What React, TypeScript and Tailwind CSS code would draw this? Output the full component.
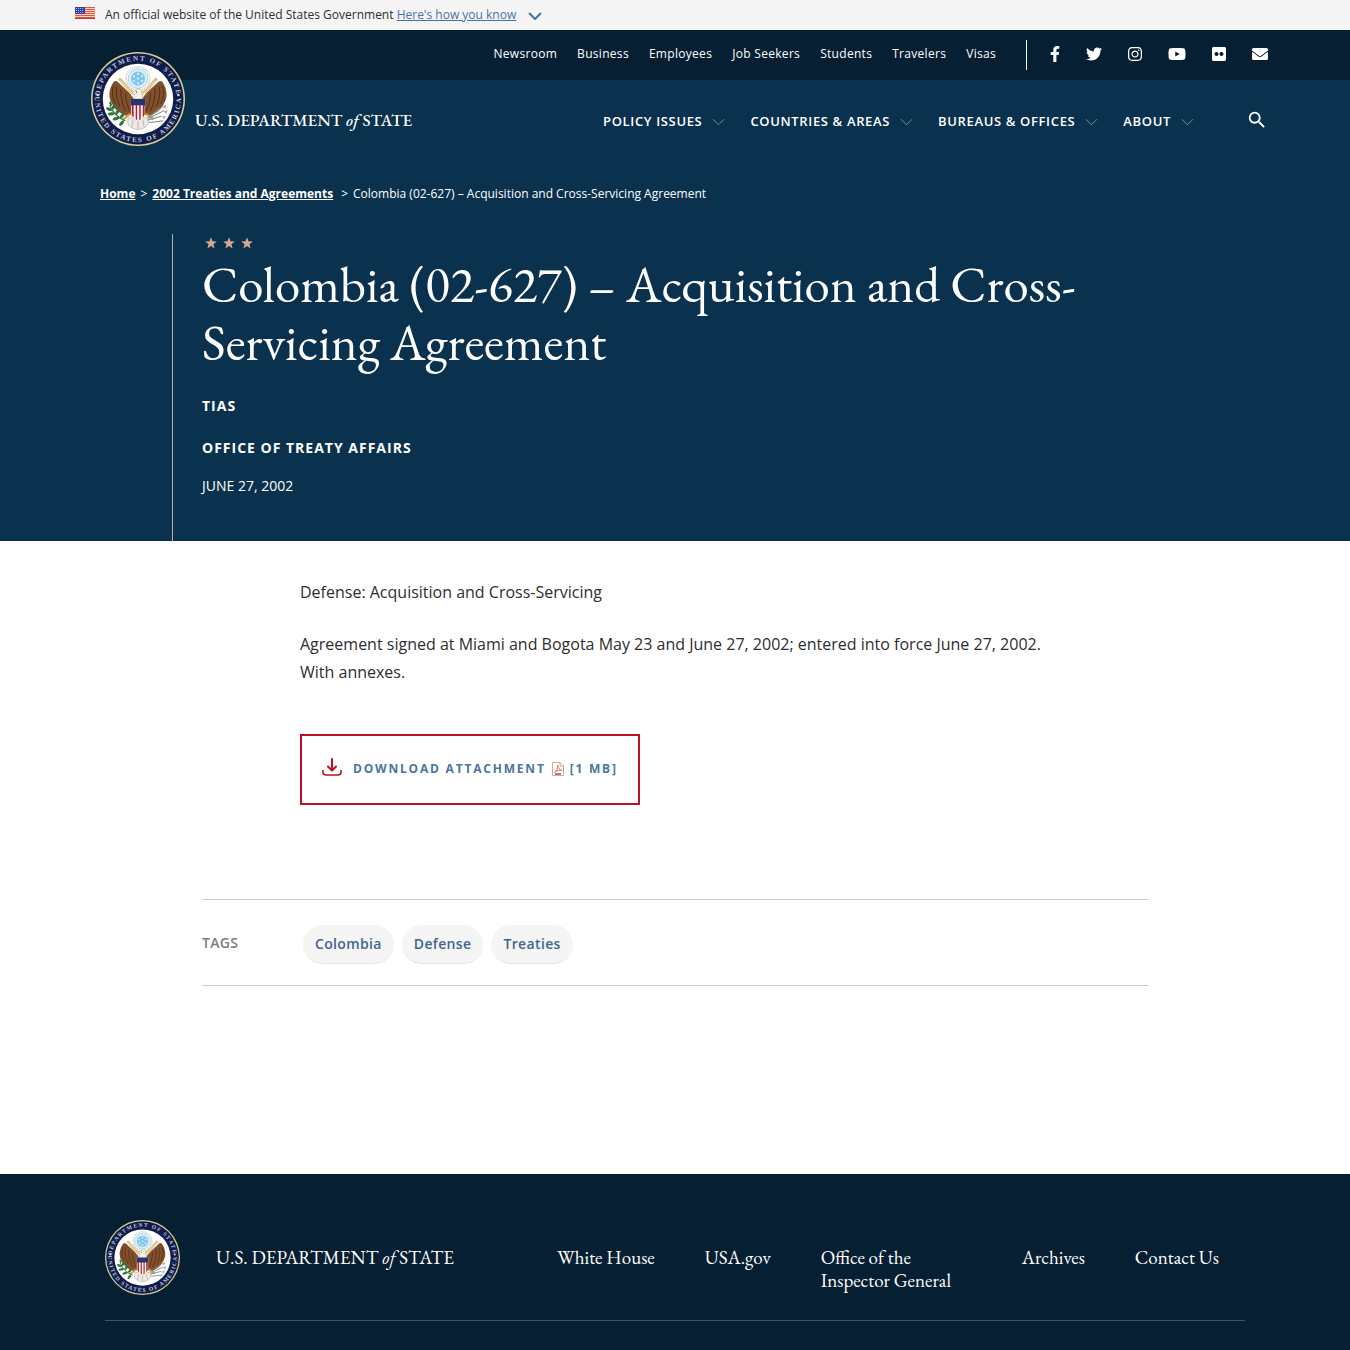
import React, { useId } from "react";
import { FaFacebookF, FaTwitter, FaInstagram, FaYoutube, FaFlickr, FaEnvelope } from "react-icons/fa";
import { MdSearch } from "react-icons/md";

const serif = "font-['EB_Garamond','Liberation_Serif',serif]";

function Flag() {
  return (
    <svg viewBox="0 0 20 12" className="h-3 w-5" aria-hidden="true">
      <rect width="20" height="12" fill="#f8d3c4" />
      {[0, 2, 4, 6, 8, 10].map((y) => (
        <rect key={y} y={y} width="20" height="1" fill="#e2573f" />
      ))}
      <rect y="11" width="20" height="1" fill="#c9302c" />
      <rect width="10" height="7" fill="#2f3fae" />
      {[1, 3, 5].map((y) =>
        [1, 3, 5, 7].map((x) => <rect key={`${x}-${y}`} x={x} y={y} width="1" height="1" fill="#a9b4ee" />)
      )}
    </svg>
  );
}

function Wing() {
  return (
    <g>
      <path d="M56 60 C53 50 45 45 36 36 C33 33 31 32 29 34 C22 44 22 55 27 62 C30 69 37 75 47 78 L56 72 Z" fill="#82502b" />
      <path d="M29 39 C26 47 27 55 31 62 M33 40 C31 48 33 58 37 66 M38 43 C38 52 39 61 44 71 M44 48 C44 56 46 64 50 72" stroke="#54301a" strokeWidth="1.3" fill="none" />
    </g>
  );
}

function Seal({ className }: { className: string }) {
  const id = useId();
  const top = `${id}-top`;
  const bottom = `${id}-bottom`;
  return (
    <svg viewBox="0 0 120 120" className={className} role="img" aria-label="Seal of the U.S. Department of State">
      <defs>
        <path id={top} d="M11 60 A49 49 0 0 1 109 60" />
        <path id={bottom} d="M5 60 A55 55 0 0 0 115 60" />
      </defs>
      <circle cx="60" cy="60" r="60" fill="#d8cf96" />
      <circle cx="60" cy="60" r="58" fill="#101d4b" />
      <circle cx="60" cy="60" r="45" fill="#fff" />
      <g fill="#c3c9dc" fontSize="9" fontFamily="Liberation Serif, serif" fontWeight="bold">
        <text textAnchor="middle" letterSpacing="2">
          <textPath href={`#${top}`} startOffset="50%">DEPARTMENT OF STATE</textPath>
        </text>
        <text textAnchor="middle" letterSpacing="2">
          <textPath href={`#${bottom}`} startOffset="50%">UNITED STATES OF AMERICA</textPath>
        </text>
      </g>
      <circle cx="8.500" cy="55" r="1.600" fill="#d9dde8" />
      <circle cx="111.500" cy="55" r="1.600" fill="#d9dde8" />
      <circle cx="60" cy="34" r="15" fill="none" stroke="#a9b6ba" strokeWidth="2" strokeDasharray="1 1.4" />
      <circle cx="60" cy="34" r="12.500" fill="#d8f0fa" stroke="#8fb9cc" strokeWidth="0.8" />
      <circle cx="60" cy="34" r="9" fill="#7fc6ea" />
      {[[60, 28], [55, 31], [65, 31], [60, 34], [55, 37], [65, 37], [60, 40]].map(([x, y]) => (
        <circle key={`${x}-${y}`} cx={x} cy={y} r="1.4" fill="#d9f1fb" />
      ))}
      <g transform="translate(0 4)">
        <Wing />
      </g>
      <g transform="matrix(-1 0 0 1 120 4)">
        <Wing />
      </g>
      <path d="M37 35 C45 42 48 53 60 54 C72 53 75 42 83 35" stroke="#d9bd7c" strokeWidth="4" fill="none" strokeLinecap="round" />
      <path d="M38 37 C46 43 49 54 60 55 C71 54 74 43 82 37" stroke="#f6e8bd" strokeWidth="1.200" fill="none" strokeLinecap="round" />
      <path d="M56 50 C58 46 63 46 65 50 L66 60 L54 60 L56 54 L52 53 C53 51 54 50 56 50Z" fill="#f4efe4" stroke="#a58f66" strokeWidth="0.6" />
      <circle cx="58" cy="51" r=".8" fill="#222" />
      <path d="M48 84 C44 92 50 98 60 99 C70 98 76 92 72 84Z" fill="#eceae4" stroke="#aaa79c" strokeWidth="0.8" />
      <path d="M54 86 L52 96 M60 87 V98 M66 86 L68 96" stroke="#aaa79c" strokeWidth="0.9" />
      <path d="M50 79 L40 87 M70 79 L80 86" stroke="#d99c3a" strokeWidth="3" />
      <path d="M51 60 H69 V77 C69 83 65 86 60 88 C55 86 51 83 51 77Z" fill="#fff" />
      <path d="M52 66 H54.500 V84 L52 81Z M57 66 H59 V87 L57 86Z M61.500 66 H63.500 V86 L61.500 87Z M66 66 H68.500 V80 L66 84Z" fill="#b32233" />
      <path d="M51 60 H69 V68 H51Z" fill="#26356f" />
      <path d="M24 68 C28 78 34 84 44 88" stroke="#2e7540" strokeWidth="1.500" fill="none" />
      <g fill="#2e7540">
        <ellipse cx="23" cy="73" rx="4" ry="2" transform="rotate(20 23 73)" />
        <ellipse cx="29" cy="70" rx="4" ry="2" transform="rotate(-60 29 70)" />
        <ellipse cx="26" cy="79" rx="4.500" ry="2" transform="rotate(-10 26 79)" />
        <ellipse cx="34" cy="76" rx="4.500" ry="2" transform="rotate(-60 34 76)" />
        <ellipse cx="32" cy="85" rx="4.500" ry="2" transform="rotate(-20 32 85)" />
        <ellipse cx="40" cy="81" rx="4" ry="2" transform="rotate(-50 40 81)" />
        <ellipse cx="39" cy="91" rx="4" ry="2" transform="rotate(-50 39 91)" />
        <ellipse cx="25" cy="66" rx="3" ry="1.500" transform="rotate(70 25 66)" />
      </g>
      <path d="M72 87 L90 82 M73 85 L93 75 M74 90 L92 88 M73 84 L91 70" stroke="#8f9195" strokeWidth="1.500" />
      <path d="M91 70 l5 -3 -1 5z M93 76 l5 -2 -2 5z M91 82 l5 0 -3 4z" fill="#a9a497" />
    </svg>
  );
}

function Wordmark({ className }: { className: string }) {
  return (
    <span className={`${serif} whitespace-nowrap ${className}`}>
      U.S. DEPARTMENT <em>of</em> STATE
    </span>
  );
}

function Chevron({ className, width }: { className: string; width: number }) {
  return (
    <svg viewBox="0 0 14 8" className={className} fill="none" stroke="currentColor" strokeWidth={width} aria-hidden="true">
      <path d="M1 1 L7 7 L13 1" />
    </svg>
  );
}

function PdfIcon() {
  return (
    <svg viewBox="0 0 12 14" className="h-3.5 w-3" fill="none" stroke="#e08a80" aria-hidden="true">
      <path d="M0.500 0.500 H8 L11.500 4 V13.500 H0.500Z M8 0.500 V4 H11.500" strokeWidth="0.800" />
      <path d="M5.500 3 C6.500 6 8 8.500 10 8.500 C8 7.500 4 8.500 2.500 10.500 C4.500 9.500 6 6 5.500 3Z" stroke="#d9675c" strokeWidth="0.900" />
      <path d="M3 12 H9" stroke="#8c4440" strokeWidth="1.400" />
    </svg>
  );
}

const utility = ["Newsroom", "Business", "Employees", "Job Seekers", "Students", "Travelers", "Visas"];
const menus = ["POLICY ISSUES", "COUNTRIES & AREAS", "BUREAUS & OFFICES", "ABOUT"];
const social = [
  { name: "Facebook", Icon: FaFacebookF, cls: "w-2.5" },
  { name: "Twitter", Icon: FaTwitter, cls: "w-4" },
  { name: "Instagram", Icon: FaInstagram, cls: "w-3.5" },
  { name: "YouTube", Icon: FaYoutube, cls: "w-[18px]" },
  { name: "Flickr", Icon: FaFlickr, cls: "w-3.5" },
  { name: "Email", Icon: FaEnvelope, cls: "w-4" },
];
const tags = ["Colombia", "Defense", "Treaties"];

export default function App() {
  return (
    <div className="bg-white font-['Open_Sans',sans-serif] text-[#323a45]">
      <div className="bg-[#f5f5f5]">
        <div className="mx-auto flex h-[30px] max-w-[1200px] items-center text-xs text-[#2e2e2e]">
          <div className="-mt-1 mr-2.5"><Flag /></div>
          <p>
            An official website of the United States Government{" "}
            <button type="button" className="text-[#4773aa] underline">Here's how you know</button>
          </p>
          <Chevron className="ml-3 mt-0.5 h-2 w-3.5 text-[#4773aa]" width={2} />
        </div>
      </div>

      <header className="bg-[#0a314d] text-white">
        <div className="bg-[#071f33]">
          <div className="mx-auto flex h-[50px] max-w-[1200px] items-center justify-end pr-[7px]">
            <nav aria-label="Utility" className="-mt-0.5 flex gap-5 text-xs tracking-wide">
              {utility.map((t) => (
                <a key={t} href="#">{t}</a>
              ))}
            </nav>
            <div className="ml-[30px] flex h-[30px] items-center gap-[26px] border-l border-white pb-0.5 pl-[23px]">
              {social.map(({ name, Icon, cls }) => (
                <a key={name} href="#" aria-label={name}>
                  <Icon className={`h-4 ${cls}`} />
                </a>
              ))}
            </div>
          </div>
        </div>

        <div className="relative mx-auto flex h-20 max-w-[1200px] items-center justify-between pl-[120px] pr-[7px]">
          <a href="#" className="absolute -top-7 left-4">
            <Seal className="size-[94px]" />
          </a>
          <a href="#" className="mt-0.5"><Wordmark className="text-[17px] font-medium" /></a>
          <div className="flex items-center">
            <nav aria-label="Main" className="mr-[52px] mt-1 flex gap-[25px] text-[13px] font-semibold">
              {menus.map((t) => (
                <button key={t} type="button" className="flex items-center tracking-wider">
                  {t}
                  <Chevron className="ml-2.5 h-2 w-[13px] text-[#7f97a8]" width={1} />
                </button>
              ))}
            </nav>
            <button type="button" aria-label="Search"><MdSearch className="size-[22px]" /></button>
          </div>
        </div>

        <div className="mx-auto max-w-[1150px] pt-[25px] text-xs">
          <nav aria-label="Breadcrumb" className="flex leading-[18px]">
            <a href="#" className="font-bold underline">Home</a>
            <span className="mx-[5px]">&gt;</span>
            <a href="#" className="font-bold underline">2002 Treaties and Agreements</a>
            <span className="ml-2 mr-[5px]">&gt;</span>
            <span>Colombia (02-627) – Acquisition and Cross-Servicing Agreement</span>
          </nav>
        </div>

        <div className="mx-auto max-w-[1006px] pt-[31px]">
          <div className="border-l border-[#b9ad9f] pb-[45px] pl-[29px]">
            <div className="flex h-[21px] gap-1 pl-0.5 pt-0.5 text-[#d3a88c]" aria-hidden="true">
              {[0, 1, 2].map((i) => (
                <svg key={i} viewBox="0 0 24 24" className="size-3.5" fill="currentColor">
                  <path d="M12 2l2.600 7.200 7.400.3-5.800 4.700 2 7.300-6.200-4.200-6.200 4.200 2-7.300L2 9.500l7.400-.3z" />
                </svg>
              ))}
            </div>
            <h1 className={`${serif} max-w-[900px] text-[51px] leading-[58px]`}>
              Colombia (02-627) – Acquisition and Cross-Servicing Agreement
            </h1>
            <p className="mt-[25px] text-sm font-bold leading-5 tracking-[1px]">TIAS</p>
            <p className="mt-[22px] text-sm font-bold leading-5 tracking-[1px]">OFFICE OF TREATY AFFAIRS</p>
            <p className="mt-[18px] text-sm leading-5">JUNE 27, 2002</p>
          </div>
        </div>
      </header>

      <main className="mx-auto max-w-[946px] pb-[188px] pt-[37px]">
        <div className="mx-auto max-w-[750px] text-base leading-7 text-[#2e2e2e]">
          <p>Defense: Acquisition and Cross-Servicing</p>
          <p className="mt-6">
            Agreement signed at Miami and Bogota May 23 and June 27, 2002; entered into force June 27, 2002. With annexes.
          </p>
          <a
            href="#"
            className="mt-12 inline-flex h-[71px] w-[340px] items-center whitespace-nowrap border-2 border-[#ba1222] pb-0.5 pl-5 text-xs font-bold tracking-[0.15em] text-[#4b759e]"
          >
            <svg viewBox="0 0 20 18" className="mr-[11px] h-[18px] w-5 -mt-1" fill="none" stroke="#ba1222" strokeWidth="2" strokeLinecap="round" strokeLinejoin="round" aria-hidden="true">
              <path d="M10 1 V12 M6 8.500 L10 12.500 L14 8.500" />
              <path d="M1 12.500 V14 Q1 17 4 17 H16 Q19 17 19 14 V12.500" strokeWidth="1.600" />
            </svg>
            DOWNLOAD ATTACHMENT
            <span className="mx-1.5"><PdfIcon /></span>
            [1 MB]
          </a>
        </div>

        <section className="mt-[94px] flex h-[87px] items-center border-y border-[#c3cdd2] text-sm font-semibold tracking-wide">
          <h2 className="w-[101px] text-[#7c7c7c]">TAGS</h2>
          <ul className="mt-1 flex gap-2">
            {tags.map((t) => (
              <li key={t}>
                <a href="#" className="flex h-[39px] items-center rounded-full border-b border-[#e6e6e6] bg-[#f5f5f5] px-3 text-[#41658f]">
                  {t}
                </a>
              </li>
            ))}
          </ul>
        </section>
      </main>

      <footer className="bg-[#071f33] text-white">
        <div className="mx-auto max-w-[1140px] pb-[29px] pt-[46px]">
          <div className="flex items-start justify-between border-b border-[#3f5365] pb-[25px] pr-[26px]">
            <a href="#" className="flex items-center gap-9">
              <Seal className="size-[75px]" />
              <Wordmark className="pt-0.5 text-[19px]" />
            </a>
            <nav aria-label="Footer" className={`${serif} mt-[26px] flex gap-[50px] text-[19px] leading-[23px]`}>
              <a href="#">White House</a>
              <a href="#">USA.gov</a>
              <a href="#" className="w-[151px]">Office of the Inspector General</a>
              <a href="#">Archives</a>
              <a href="#">Contact Us</a>
            </nav>
          </div>
        </div>
      </footer>
    </div>
  );
}
